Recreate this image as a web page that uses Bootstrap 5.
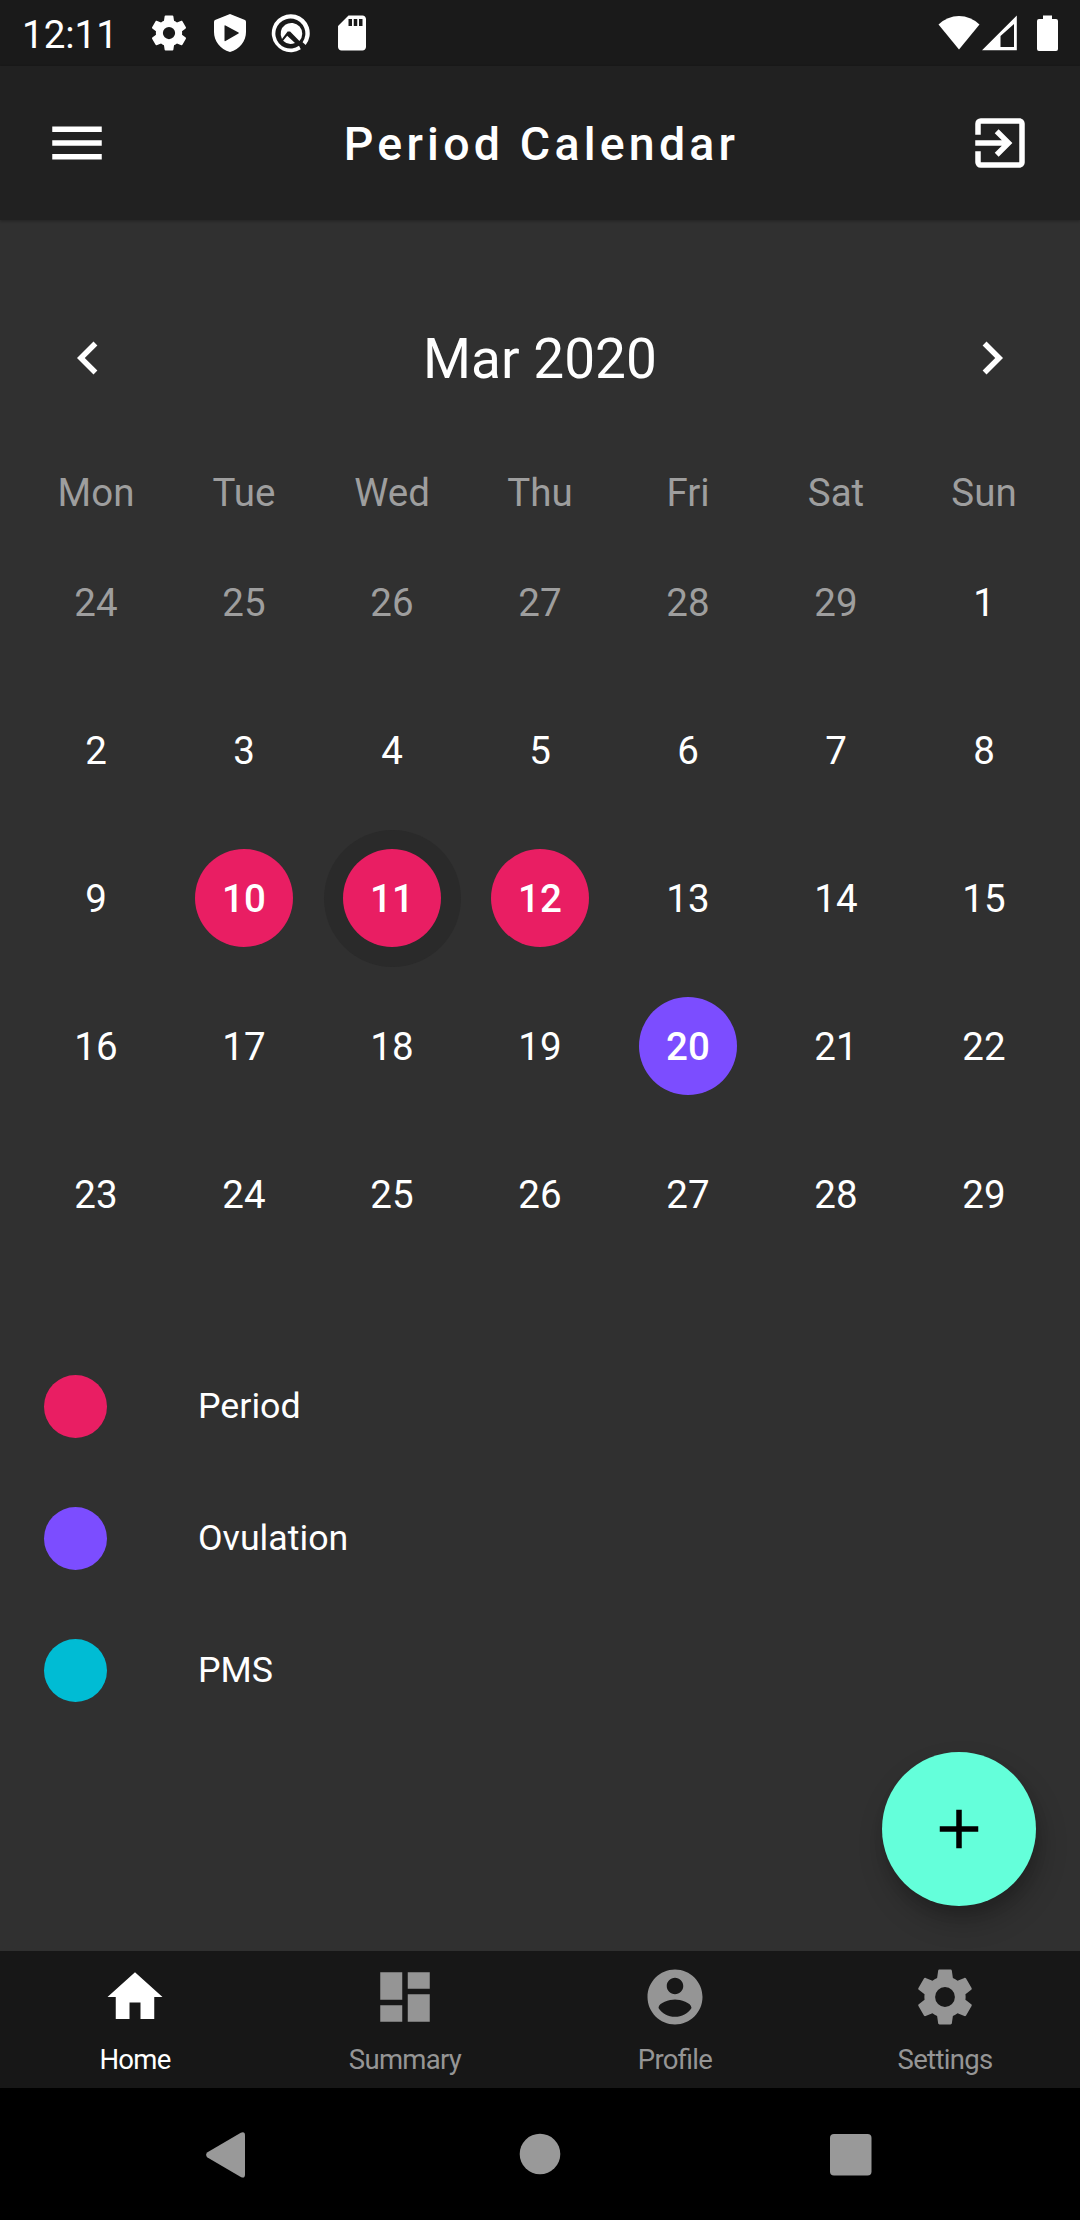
<!DOCTYPE html>
<html lang="en">
<head>
<meta charset="utf-8">
<meta name="viewport" content="width=device-width, initial-scale=1">
<title>Period Calendar</title>
<link href="https://cdn.jsdelivr.net/npm/bootstrap@5.3.0/dist/css/bootstrap.min.css" rel="stylesheet">
<style>
  body { font-family: Roboto, "Noto Sans", sans-serif; background: #303030; color: #fff; width: 1080px; height: 2220px; overflow: hidden; line-height: 1.2; }
  svg { display: block; fill: currentColor; flex: none; }
  .icon-md { width: 66px; height: 66px; }
  .icon-sm { width: 42px; height: 42px; }
  .status-bar { height: 66px; background: #1a1a1a; padding-left: 22px; padding-right: 22px; }
  .clock { font-size: 38.5px; width: 126px; padding-top: 4px; }
  .status-icons { gap: 19px; }
  .app-bar { height: 154px; background: #212121; padding: 0 47px 0 44px; box-shadow: 0 1px 3px rgba(0,0,0,.3); }
  .app-title { font-size: 46.5px; font-weight: 500; letter-spacing: 4.2px; padding: 3px 0 0 6px; }
  .calendar { padding: 105px 22px 0; }
  .month-row { height: 66px; padding: 0 33px; margin-bottom: 71px; }
  .month-name { font-size: 55px; padding-top: 2px; }
  .week-head { height: 60px; margin-bottom: 6px; font-size: 38.5px; color: #9e9e9e; }
  .week-head > .col { padding-top: 3px; }
  .week { height: 148px; font-size: 38.5px; }
  .day { width: 98.6px; height: 98.6px; padding-top: 3px; }
  .day.period, .day.ovulation { font-weight: 500; border-radius: 50%; }
  .halo { width: 137px; height: 137px; border-radius: 50%; background: #2a2a2a; }
  .period { background: #e91e63; }
  .ovulation { background: #7c4dff; }
  .pms { background: #00bcd4; }
  .outside { color: #9e9e9e; }
  .legend { padding: 72px 44px 0; }
  .legend-row { height: 132px; gap: 91px; font-size: 35.75px; }
  .legend-dot { width: 63px; height: 63px; border-radius: 50%; }
  .fab { position: absolute; left: 882px; top: 1752px; width: 154px; height: 154px; border-radius: 50%; background: #64ffda; color: #000; border: 0; box-shadow: 4px 16px 28px rgba(0,0,0,.22), 2px 8px 12px rgba(0,0,0,.1); }
  .tab-bar { height: 137px; background: #171717; color: #959595; }
  .tab { padding-top: 13px; font-size: 27.5px; letter-spacing: -.7px; line-height: 32px; font-feature-settings: "liga" 1; }
  .tab-label { margin-top: 14px; }
  .tab.active { color: #fff; }
  .system-nav { height: 132px; background: #000; color: #999; }
</style>
</head>
<body class="d-flex flex-column">
<header>
  <div class="status-bar d-flex align-items-center">
    <div class="clock">12:11</div>
    <div class="status-icons d-flex align-items-center">
      <svg class="icon-sm" viewBox="0 0 24 24"><path d="M19.43 12.98c.04-.32.07-.64.07-.98s-.03-.66-.07-.98l2.11-1.65c.19-.15.24-.42.12-.64l-2-3.46c-.12-.22-.39-.3-.61-.22l-2.49 1c-.52-.4-1.08-.73-1.69-.98l-.38-2.65C14.46 2.18 14.25 2 14 2h-4c-.25 0-.46.18-.49.42l-.38 2.65c-.61.25-1.17.59-1.69.98l-2.49-1c-.23-.09-.49 0-.61.22l-2 3.46c-.13.22-.07.49.12.64l2.11 1.65c-.04.32-.07.65-.07.98s.03.66.07.98l-2.11 1.65c-.19.15-.24.42-.12.64l2 3.46c.12.22.39.3.61.22l2.49-1c.52.4 1.08.73 1.69.98l.38 2.65c.03.24.24.42.49.42h4c.25 0 .46-.18.49-.42l.38-2.65c.61-.25 1.17-.59 1.69-.98l2.49 1c.23.09.49 0 .61-.22l2-3.46c.12-.22.07-.49-.12-.64l-2.11-1.65zM12 15.5a3.5 3.5 0 1 1 0-7 3.5 3.5 0 0 1 0 7z"/></svg>
      <svg class="icon-sm" viewBox="0 0 42 42"><path fill-rule="evenodd" d="M21 2 36 8Q37 8.500 37 10V20C37 29 31 37 21 40 11 37 5 29 5 20V10Q5 8.500 6 8ZM15.500 14V28.500Q15.500 29.500 16.500 29L29.500 21.600Q30.300 21 29.500 20.500L16.500 13.500Q15.500 13 15.500 14Z"/></svg>
      <svg class="icon-sm" viewBox="0 0 42 42"><path d="M30.800 37.300A19 19 0 1 1 35.700 32.900L32.600 30.200A15 15 0 1 0 29 33.800Z"/><path d="M29.400 29A10.800 10.800 0 1 0 12 26.900L17.600 19.400 20.100 19.600ZM17.200 23.800 13.100 28.700A10.800 10.800 0 0 0 25 30.900Z"/></svg>
      <svg class="icon-sm" viewBox="0 0 24 24"><path d="M18 2h-8L4.020 8 4 20c0 1.100.9 2 2 2h12c1.100 0 2-.9 2-2V4c0-1.100-.9-2-2-2zm-6 6h-2V4h2v4zm3 0h-2V4h2v4zm3 0h-2V4h2v4z"/></svg>
    </div>
    <div class="d-flex align-items-center ms-auto">
      <svg width="42" height="36" viewBox="0 0 42 36"><path d="M21 34.500.5 9.500Q9.500 1 21 1T41.500 9.500Z"/></svg>
      <svg width="38" height="36" viewBox="0 0 38 36"><path fill-rule="evenodd" d="M2 35.200 36.800.4V35.200ZM20.500 21V32H34V9Z"/></svg>
      <svg width="40" height="36" viewBox="0 0 40 36"><path d="M25 .5h9V4h4q2 0 2 2v28q0 2-2 2H21q-2 0-2-2V6q0-2 2-2h4Z"/></svg>
    </div>
  </div>
  <nav class="app-bar d-flex align-items-center justify-content-between position-relative">
    <svg class="icon-md" viewBox="0 0 24 24"><path d="M3 18h18v-2H3v2zm0-5h18v-2H3v2zm0-7v2h18V6H3z"/></svg>
    <div class="app-title">Period Calendar</div>
    <svg class="icon-md" viewBox="0 0 24 24"><path d="M10.090 15.590 11.500 17l5-5-5-5-1.410 1.410L12.670 11H3v2h9.670l-2.580 2.590zM19 3H5a2 2 0 0 0-2 2v4h2V5h14v14H5v-4H3v4a2 2 0 0 0 2 2h14c1.100 0 2-.9 2-2V5c0-1.100-.9-2-2-2z"/></svg>
  </nav>
</header>

<main class="flex-grow-1">
  <section class="calendar">
    <div class="month-row d-flex align-items-center justify-content-between">
      <svg class="icon-md" viewBox="0 0 24 24"><path d="M15.410 7.410 14 6l-6 6 6 6 1.410-1.410L10.830 12z"/></svg>
      <div class="month-name">Mar 2020</div>
      <svg class="icon-md" viewBox="0 0 24 24"><path d="M10 6 8.590 7.410 13.170 12l-4.580 4.590L10 18l6-6z"/></svg>
    </div>
    <div class="week-head row g-0 align-items-center text-center">
      <div class="col">Mon</div><div class="col">Tue</div><div class="col">Wed</div><div class="col">Thu</div><div class="col">Fri</div><div class="col">Sat</div><div class="col">Sun</div>
    </div>
    <div id="weeks"></div>
  </section>

  <section class="legend">
    <div class="legend-row d-flex align-items-center"><span class="legend-dot period"></span><span>Period</span></div>
    <div class="legend-row d-flex align-items-center"><span class="legend-dot ovulation"></span><span>Ovulation</span></div>
    <div class="legend-row d-flex align-items-center"><span class="legend-dot pms"></span><span>PMS</span></div>
  </section>
</main>

<button class="fab d-flex align-items-center justify-content-center p-0" aria-label="Add">
  <svg class="icon-md" viewBox="0 0 24 24"><path d="M19 13h-6v6h-2v-6H5v-2h6V5h2v6h6v2z"/></svg>
</button>

<footer>
  <nav class="tab-bar row g-0 text-center">
    <div class="tab active col d-flex flex-column align-items-center">
      <svg class="icon-md" viewBox="0 0 24 24"><path d="M10 20v-6h4v6h5v-8h3L12 3 2 12h3v8z"/></svg>
      <span class="tab-label">Home</span>
    </div>
    <div class="tab col d-flex flex-column align-items-center">
      <svg class="icon-md" viewBox="0 0 24 24"><path d="M3 13h8V3H3v10zm0 8h8v-6H3v6zm10 0h8V11h-8v10zm0-18v6h8V3h-8z"/></svg>
      <span class="tab-label">Summary</span>
    </div>
    <div class="tab col d-flex flex-column align-items-center">
      <svg class="icon-md" viewBox="0 0 24 24"><path d="M12 2C6.480 2 2 6.480 2 12s4.480 10 10 10 10-4.480 10-10S17.520 2 12 2zm0 3c1.660 0 3 1.340 3 3s-1.340 3-3 3-3-1.340-3-3 1.340-3 3-3zm0 14.200c-2.500 0-4.710-1.280-6-3.220.03-1.990 4-3.080 6-3.080 1.990 0 5.970 1.090 6 3.080-1.290 1.940-3.500 3.220-6 3.220z"/></svg>
      <span class="tab-label">Profile</span>
    </div>
    <div class="tab col d-flex flex-column align-items-center">
      <svg class="icon-md" viewBox="0 0 24 24"><path d="M19.430 12.980c.04-.32.07-.64.07-.98s-.03-.66-.07-.98l2.110-1.650c.19-.15.24-.42.12-.64l-2-3.460c-.12-.22-.39-.3-.61-.22l-2.490 1c-.52-.4-1.080-.73-1.690-.98l-.38-2.650C14.460 2.180 14.250 2 14 2h-4c-.25 0-.46.18-.49.42l-.38 2.650c-.61.25-1.170.59-1.690.98l-2.490-1c-.23-.09-.49 0-.61.22l-2 3.460c-.13.22-.07.49.12.64l2.110 1.650c-.04.32-.07.65-.07.98s.03.66.07.98l-2.110 1.650c-.19.15-.24.42-.12.64l2 3.460c.12.22.39.3.61.22l2.490-1c.52.4 1.080.73 1.690.98l.38 2.650c.03.24.24.42.49.42h4c.25 0 .46-.18.49-.42l.38-2.650c.61-.25 1.170-.59 1.690-.98l2.490 1c.23.09.49 0 .61-.22l2-3.460c.12-.22.07-.49-.12-.64l-2.110-1.650zM12 15.600a3.600 3.600 0 1 1 0-7.200 3.600 3.600 0 0 1 0 7.200z"/></svg>
      <span class="tab-label">Settings</span>
    </div>
  </nav>
  <div class="system-nav d-flex align-items-center">
    <svg width="1080" height="132" viewBox="0 0 1080 132"><path d="M207.500 64.200 240.800 44.700Q245 43 245 47.500V86.500Q245 91 240.800 89L207.500 69.500Q204.700 66.800 207.500 64.200Z"/><circle cx="540" cy="66" r="20.300"/><rect x="830" y="46" width="41.500" height="41.500" rx="4"/></svg>
  </div>
</footer>

<script src="https://cdn.jsdelivr.net/npm/bootstrap@5.3.0/dist/js/bootstrap.bundle.min.js"></script>
<script>
  // 35 cells starting on Monday 24 February 2020
  const marks = { '2-10': 'period', '2-11': 'period', '2-12': 'period', '2-20': 'ovulation' };
  let html = '';
  for (let w = 0; w < 5; w++) {
    html += '<div class="week row g-0">';
    for (let d = 0; d < 7; d++) {
      const date = new Date(2020, 1, 24 + w * 7 + d);
      const key = date.getMonth() + '-' + date.getDate();
      const cls = date.getMonth() === 1 ? 'outside' : (marks[key] || '');
      const cell = `<div class="day d-flex align-items-center justify-content-center ${cls}">${date.getDate()}</div>`;
      html += '<div class="col d-flex align-items-center justify-content-center">' +
        (key === '2-11' ? `<div class="halo d-flex align-items-center justify-content-center">${cell}</div>` : cell) + '</div>';
    }
    html += '</div>';
  }
  document.getElementById('weeks').innerHTML = html;
</script>
</body>
</html>
